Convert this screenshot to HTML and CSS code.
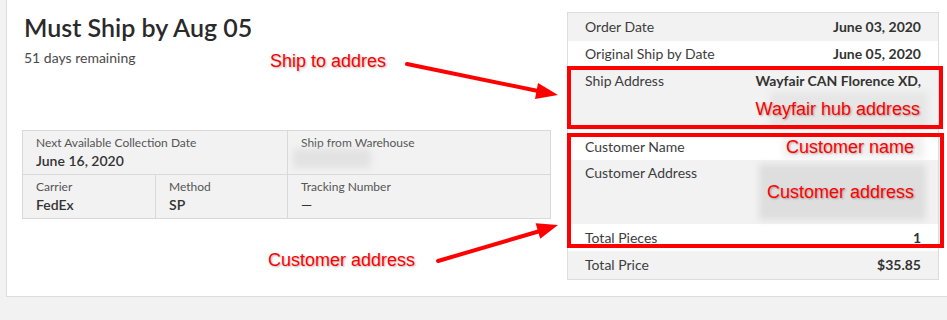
FILE: index.html
```html
<!DOCTYPE html>
<html lang="en">
<head>
  <meta charset="UTF-8" />
  <meta name="viewport" content="width=device-width, initial-scale=1.0" />
  <title>Order - Must Ship by Aug 05</title>
  <link rel="stylesheet" href="styles.css">
</head>
<body>
  <div class="card">
    <section class="summary">
      <h1 class="title">Must Ship by Aug 05</h1>
      <p class="remaining">51 days remaining</p>

      <div class="shipping-grid">
        <div class="cell cell-wide">
          <span class="cell-label">Next Available Collection Date</span>
          <span class="cell-value">June 16, 2020</span>
        </div>
        <div class="cell">
          <span class="cell-label">Ship from Warehouse</span>
          <span class="redact redact-warehouse"></span>
        </div>
        <div class="cell">
          <span class="cell-label">Carrier</span>
          <span class="cell-value">FedEx</span>
        </div>
        <div class="cell">
          <span class="cell-label">Method</span>
          <span class="cell-value">SP</span>
        </div>
        <div class="cell">
          <span class="cell-label">Tracking Number</span>
          <span class="cell-value">—</span>
        </div>
      </div>
    </section>

    <aside class="details">
      <div class="detail-row">
        <span class="detail-label">Order Date</span>
        <span class="detail-value">June 03, 2020</span>
      </div>
      <div class="detail-row row-original">
        <span class="detail-label">Original Ship by Date</span>
        <span class="detail-value">June 05, 2020</span>
      </div>
      <div class="detail-row row-ship">
        <span class="detail-label">Ship Address</span>
        <div class="detail-stack">
          <span class="detail-value">Wayfair CAN Florence XD,</span>
          <span class="redact redact-hub"><span class="marker">Wayfair hub address</span></span>
        </div>
      </div>
      <div class="detail-row row-name">
        <span class="detail-label">Customer Name</span>
        <span class="redact redact-name"><span class="marker">Customer name</span></span>
      </div>
      <div class="detail-row row-address">
        <span class="detail-label">Customer Address</span>
        <span class="redact redact-address"><span class="marker">Customer address</span></span>
      </div>
      <div class="detail-row row-pieces">
        <span class="detail-label">Total Pieces</span>
        <span class="detail-value">1</span>
      </div>
      <div class="detail-row">
        <span class="detail-label">Total Price</span>
        <span class="detail-value">$35.85</span>
      </div>
    </aside>
  </div>

  <!-- annotations drawn over the screenshot -->
  <div class="annotations">
    <svg class="marks" width="947" height="320" viewBox="0 0 947 320">
      <rect x="569" y="68" width="372" height="59" />
      <rect x="569" y="135" width="373" height="111" />
      <line x1="407" y1="64" x2="538" y2="91" />
      <polygon points="538,83 535,99 558,95" />
      <line x1="438" y1="261" x2="540" y2="231" />
      <polygon points="535.6,223.3 540.2,238.7 558,225" />
    </svg>
    <span class="note note-ship">Ship to addres</span>
    <span class="note note-customer">Customer address</span>
  </div>
</body>
</html>
```

FILE: styles.css
```css
:root {
  --text: #333;
  --subtext: #555;
  --bg: #f2f2f2;
  --row: #f2f2f2;
  --line: #d9d9d9;
  --white: #fff;
  --red: #ff0000;
}

* {
  box-sizing: border-box;
}

body {
  font-family: Lato, "Liberation Sans", sans-serif;
  margin: 0;
  background-color: var(--bg);
  color: var(--text);
  position: relative;
  overflow: hidden;
  height: 320px;
}

.card {
  display: flex;
  align-items: flex-start;
  width: 960px;
  height: 297px;
  margin-left: 6px;
  background-color: var(--white);
  border-left: 1px solid #dcdcdc;
  border-bottom: 1px solid #dcdcdc;
}

/* left side */

.summary {
  width: 560px;
  padding: 11px 0 0 15px;
}

.title {
  margin: 0 0 0 2px;
  font-size: 25px;
  line-height: 32px;
  font-weight: 600;
  color: #2a2a2a;
}

.remaining {
  margin: 6px 0 0 2px;
  font-size: 14px;
  line-height: 18px;
  color: #4a4a4a;
}

.shipping-grid {
  display: grid;
  grid-template-columns: 132px 131px 262px;
  gap: 1px;
  width: 529px;
  margin-top: 63px;
  background-color: var(--line);
  border: 1px solid var(--line);
}

.cell {
  padding: 5px 13px;
  background-color: var(--row);
  min-height: 43px;
}

.cell-wide {
  grid-column: span 2;
}

.cell-label {
  display: block;
  font-size: 12px;
  line-height: 13px;
  color: var(--subtext);
}

.cell-value {
  display: block;
  margin-top: 4px;
  font-size: 14px;
  line-height: 16px;
  font-weight: 600;
  color: var(--text);
}

/* right side */

.details {
  width: 372px;
  margin-top: 12px;
  border: 1px solid #dcdcdc;
}

.detail-row {
  display: flex;
  justify-content: space-between;
  align-items: flex-start;
  height: 28px;
  padding: 6px 17px 0;
  font-size: 14px;
  line-height: 16px;
  background-color: var(--white);
}

.detail-row:nth-child(odd) {
  background-color: var(--row);
}

.row-original {
  height: 25px;
  padding-top: 5px;
}

.row-ship {
  height: 64px;
  padding-top: 7px;
}

.row-name {
  height: 30px;
  padding-top: 5px;
}

.row-name .detail-label {
  padding-top: 4px;
}

.row-address {
  height: 64px;
  padding-top: 4px;
}

.row-address .detail-label {
  padding-top: 1px;
}

.row-pieces {
  height: 27px;
}

.detail-label {
  color: #3d3d3d;
}

.detail-value {
  font-weight: 700;
  color: var(--text);
}

.detail-stack {
  display: flex;
  flex-direction: column;
  align-items: flex-end;
}

/* blurred-out values */

.redact {
  position: relative;
  display: flex;
  align-items: center;
  justify-content: flex-end;
}

.redact::before {
  content: "";
  position: absolute;
  inset: 0;
  background-color: #dedede;
  filter: blur(3px);
}

.redact-warehouse {
  width: 78px;
  height: 19px;
  margin-left: -8px;
}

.redact-warehouse::before {
  background-color: #e2e2e2;
}

.redact-hub {
  width: 158px;
  height: 36px;
  margin: 3px -7px 0 0;
  padding: 0 8px 3px 0;
}

.redact-hub::before {
  background-color: #e6e6e6;
}

.redact-name {
  width: 141px;
  height: 23px;
  margin-right: -3px;
  padding-right: 10px;
}

.redact-name::before {
  background-color: #f0f0f0;
}

.redact-address {
  width: 167px;
  height: 56px;
  margin: 0 -5px 0 0;
  padding-right: 12px;
}

.marker {
  position: relative;
  font-family: "Liberation Sans", Arial, sans-serif;
  font-size: 18px;
  line-height: 20px;
  color: var(--red);
  white-space: nowrap;
  text-shadow: 1px 1px 2px rgba(0,0,0,0.3);
}

/* annotation layer */

.annotations {
  position: absolute;
  inset: 0;
  pointer-events: none;
}

.marks {
  position: absolute;
  top: 0;
  left: 0;
}

.marks rect {
  fill: none;
  stroke: var(--red);
  stroke-width: 4;
}

.marks line {
  stroke: var(--red);
  stroke-width: 4;
  stroke-linecap: round;
}

.marks polygon {
  fill: var(--red);
}

.note {
  position: absolute;
  font-family: "Liberation Sans", Arial, sans-serif;
  font-size: 18px;
  line-height: 20px;
  color: var(--red);
  text-shadow: 1px 1px 2px rgba(0,0,0,0.3);
}

.note-ship {
  left: 270px;
  top: 51px;
}

.note-customer {
  left: 268px;
  top: 250px;
}
```
